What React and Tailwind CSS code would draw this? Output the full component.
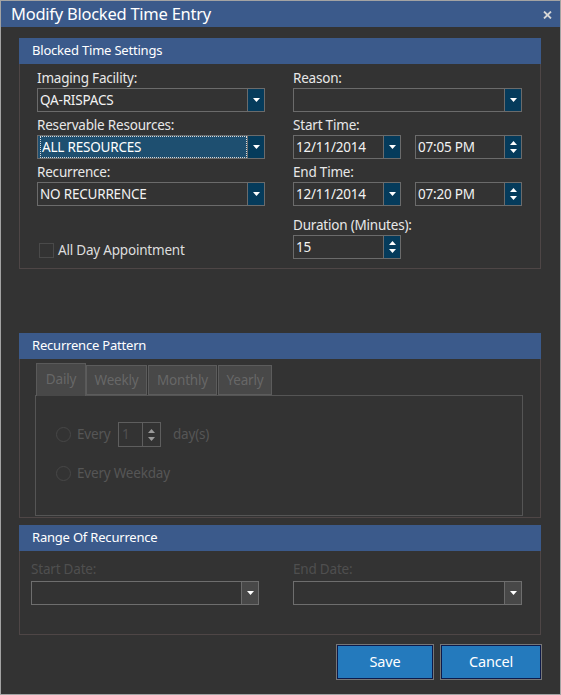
import React from "react";

const Arrow = ({ color = "#ffffff" }) => (
  <svg width="7" height="4" viewBox="0 0 7 4"><path d="M0 0H7L3.5 4Z" fill={color} /></svg>
);

const Spin = ({ color = "#ffffff" }) => (
  <svg width="7" height="12" viewBox="0 0 7 12">
    <path d="M3.5 0L7 4H0Z" fill={color} />
    <path d="M0 8H7L3.5 12Z" fill={color} />
  </svg>
);

function Combo({ w, value = "", selected = false, disabled = false, spin = false }) {
  return (
    <div className={`flex h-[24px] border ${disabled ? "border-[#6e6e6e]" : "border-[#6b6b6b]"} ${w}`}>
      <div className={`flex-1 flex items-center pl-[2px] text-[13.5px] tracking-[-0.2px] ${selected ? "bg-[#1e4f70]" : ""}`}>
        {selected ? (
          <div className="w-full h-full border border-dotted border-[#d8d8d8] flex items-center pl-[1px] text-white">{value}</div>
        ) : (
          <span className="text-[#f2f2f2]">{value}</span>
        )}
      </div>
      <div className={`w-[17px] flex items-center justify-center border-l border-[#6b6b6b] ${disabled ? "bg-[#484848]" : "bg-[#053b5b]"}`}>
        {spin ? <Spin /> : <Arrow />}
      </div>
    </div>
  );
}

function Label({ children, h = "h-[23px]" }) {
  return (
    <div className={`${h} flex items-end text-[13.5px] tracking-[-0.2px] leading-[19px] text-[#e8e8e8]`}>
      {children}
    </div>
  );
}

function Group({ title, h, children }) {
  return (
    <div className="w-[522px] flex flex-col">
      <div className="h-[26px] bg-[#3b5a8b] flex items-center pl-[13px] text-[13px] tracking-[-0.2px] text-white">{title}</div>
      <div className={`${h} border-x border-b border-[#4e4646]`}>{children}</div>
    </div>
  );
}

function Radio() {
  return <div className="w-[15px] h-[15px] rounded-full border border-[#474747]" />;
}

export default function App() {
  return (
    <div className="w-[561px] h-[695px] bg-[#333333] border border-[#a3a3a3] flex flex-col font-['Noto_Sans',sans-serif]">
      <div className="h-[26px] bg-[#3b5a8b] flex items-center justify-between pl-[10px] pr-[8px]">
        <span className="text-[16.5px] tracking-[-0.25px] text-white leading-none">Modify Blocked Time Entry</span>
        <svg width="9" height="8" viewBox="0 0 9 8" className="mt-[1px]">
          <path d="M1 0.5L8 7.5M8 0.5L1 7.5" stroke="#d6d6d6" strokeWidth="1.8" />
        </svg>
      </div>

      <div className="pl-[18px] flex flex-col">
        <div className="mt-[11px]">
          <Group title="Blocked Time Settings" h="h-[205px]">
            <div className="flex pl-[17px]">
              <div className="w-[228px] flex flex-col">
                <Label h="h-[24px]">Imaging Facility:</Label>
                <Combo w="w-[228px]" value="QA-RISPACS" />
                <Label>Reservable Resources:</Label>
                <Combo w="w-[228px]" value="ALL RESOURCES" selected />
                <Label>Recurrence:</Label>
                <Combo w="w-[228px]" value="NO RECURRENCE" />
                <div className="mt-[35px] ml-[2px] flex items-center gap-[4px]">
                  <div className="w-[15px] h-[15px] border border-[#4a4a4a]" />
                  <span className="text-[13.5px] tracking-[-0.2px] text-[#dedede] leading-[19px]">All Day Appointment</span>
                </div>
              </div>
              <div className="ml-[28px] w-[229px] flex flex-col">
                <Label h="h-[24px]">Reason:</Label>
                <Combo w="w-[229px]" />
                <Label>Start Time:</Label>
                <div className="flex gap-[14px]">
                  <Combo w="w-[108px]" value="12/11/2014" />
                  <Combo w="w-[107px]" value="07:05 PM" spin />
                </div>
                <Label>End Time:</Label>
                <div className="flex gap-[14px]">
                  <Combo w="w-[108px]" value="12/11/2014" />
                  <Combo w="w-[107px]" value="07:20 PM" spin />
                </div>
                <Label h="h-[29px]">Duration (Minutes):</Label>
                <Combo w="w-[108px]" value="15" spin />
              </div>
            </div>
          </Group>
        </div>

        <div className="mt-[64px]">
          <Group title="Recurrence Pattern" h="h-[159px]">
            <div className="pt-[4px] flex flex-col">
              <div className="h-[32px] ml-[16px] flex items-end text-[13.5px] tracking-[-0.2px] text-[#676767]">
                <div className="relative z-10 w-[50px] h-[33px] mb-[-1px] bg-[#484848] border-x border-t border-[#5a5a5a] flex items-center justify-center pb-[1px]">Daily</div>
                <div className="w-[61px] h-[30px] bg-[#484848] border border-[#5c5c5c] flex items-center justify-center">Weekly</div>
                <div className="ml-[1px] w-[69px] h-[30px] bg-[#484848] border border-[#5c5c5c] flex items-center justify-center">Monthly</div>
                <div className="ml-[1px] w-[54px] h-[30px] bg-[#484848] border border-[#5c5c5c] flex items-center justify-center">Yearly</div>
              </div>
              <div className="ml-[15px] w-[488px] h-[121px] border border-[#555555] flex flex-col text-[13.5px] tracking-[-0.2px] text-[#565656]">
                <div className="mt-[26px] h-[25px] flex items-center">
                  <div className="ml-[20px]"><Radio /></div>
                  <span className="ml-[6px] w-[41px]">Every</span>
                  <div className="flex w-[43px] h-[25px] border border-[#5e5e5e]">
                    <div className="flex-1 flex items-center pl-[3px] text-[#505050]">1</div>
                    <div className="w-[18px] border-l border-[#5e5e5e] flex items-center justify-center">
                      <Spin color="#9a9a9a" />
                    </div>
                  </div>
                  <span className="ml-[12px]">day(s)</span>
                </div>
                <div className="mt-[14px] h-[25px] flex items-center">
                  <div className="ml-[20px]"><Radio /></div>
                  <span className="ml-[6px]">Every Weekday</span>
                </div>
              </div>
            </div>
          </Group>
        </div>

        <div className="mt-[7px]">
          <Group title="Range Of Recurrence" h="h-[84px]">
            <div className="flex">
              <div className="ml-[11px] w-[228px] flex flex-col">
                <div className="h-[30px] flex items-end pb-[2px] text-[13.5px] tracking-[-0.2px] leading-[19px] text-[#4f4f4f]">Start Date:</div>
                <Combo w="w-[228px]" disabled />
              </div>
              <div className="ml-[34px] w-[229px] flex flex-col">
                <div className="h-[30px] flex items-end pb-[2px] text-[13.5px] tracking-[-0.2px] leading-[19px] text-[#4f4f4f]">End Date:</div>
                <Combo w="w-[229px]" disabled />
              </div>
            </div>
          </Group>
        </div>

        <div className="mt-[9px] w-[523px] flex justify-end gap-[6px]">
          <button className="w-[98px] h-[36px] border border-[#777777] p-0">
            <div className="w-full h-full border border-[#0d1a4a] bg-[#247abd] flex items-center justify-center text-[14.5px] tracking-[-0.2px] text-white">Save</div>
          </button>
          <button className="w-[102px] h-[36px] border border-[#777777] p-0">
            <div className="w-full h-full border border-[#0d1a4a] bg-[#247abd] flex items-center justify-center text-[14.5px] tracking-[-0.2px] text-white">Cancel</div>
          </button>
        </div>
      </div>
    </div>
  );
}
